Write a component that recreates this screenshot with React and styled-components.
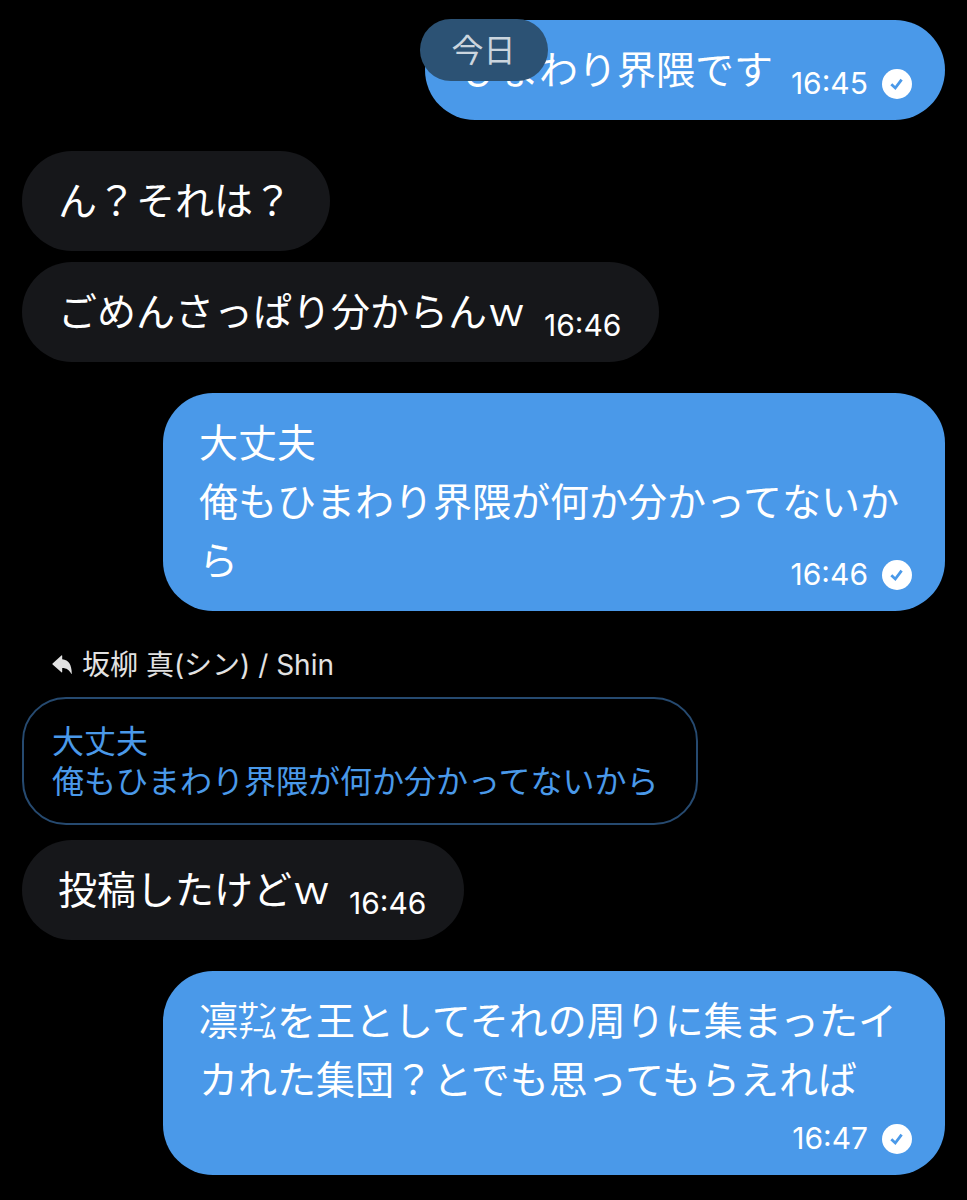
import styled, { createGlobalStyle } from "styled-components";

export default function App() {
  return (
    <>
      <GlobalStyle />
      <Chat lang="ja">
        <DateBadge>今日</DateBadge>
        <Group>
          <Message mine time="16:45">ひまわり界隈です</Message>
        </Group>
        <Group>
          <Message>ん？それは？</Message>
          <Message time="16:46">ごめんさっぱり分からんｗ</Message>
        </Group>
        <Group>
          <Message mine time="16:46">
            大丈夫
            <br />
            俺もひまわり界隈が何か分かってないから
          </Message>
        </Group>
        <Group>
          <ReplyTo>
            <ReplyIcon />
            坂柳 真(シン) / Shin
          </ReplyTo>
          <Quote>
            大丈夫
            <br />
            俺もひまわり界隈が何か分かってないから
          </Quote>
          <Message time="16:46">投稿したけどｗ</Message>
        </Group>
        <Group>
          <Message mine below time="16:47">
            凛㌠を王としてそれの周りに集まったイカれた集団？とでも思ってもらえれば
          </Message>
        </Group>
      </Chat>
    </>
  );
}

function Message({ mine, below, time, children }) {
  return (
    <Bubble $mine={mine}>
      {children}
      {time && (
        <Meta $below={below}>
          <time>{time}</time>
          {mine && <SentIcon />}
        </Meta>
      )}
    </Bubble>
  );
}

function SentIcon() {
  return (
    <svg width="30" height="30" viewBox="0 0 30 30" aria-hidden="true">
      <circle cx="15" cy="15" r="15" fill="#ffffff" />
      <path d="M9.3 15.2l4 3.8 6.3-8.3" fill="none" stroke="#4a99e9" strokeWidth="2.8" />
    </svg>
  );
}

function ReplyIcon() {
  return (
    <svg width="20" height="20" viewBox="0 0 20 20" aria-hidden="true">
      <path
        d="M0.6 8.4L9.4 0.4Q10.2 -0.1 10.2 0.8V4.3C16.8 4.8 19.6 10 19.8 18.4Q19.8 19.4 19.1 18.6C17.2 14.8 14.6 13.1 10.2 13V16.8Q10.2 17.7 9.4 17.2L0.6 9.4Q0.1 8.9 0.6 8.4Z"
        fill="#e2e2e2"
      />
    </svg>
  );
}

const GlobalStyle = createGlobalStyle`
  * {
    box-sizing: border-box;
  }
  body {
    margin: 0;
    background-color: #000000;
    font-family: "Noto Sans CJK JP", sans-serif;
  }
`;

const Chat = styled.main`
  position: relative;
  display: flex;
  flex-direction: column;
  gap: 31px;
  padding: 20px 22px 25px;
`;

const DateBadge = styled.div`
  position: absolute;
  top: 19px;
  left: 50%;
  transform: translateX(-50%);
  padding: 0 32px 4px;
  border-radius: 31px;
  background-color: #2c5274;
  color: #cbd5de;
  font-size: 32px;
  line-height: 58px;
`;

const Group = styled.section`
  display: flex;
  flex-direction: column;
  align-items: flex-start;
  gap: 11px;
`;

const Bubble = styled.div`
  max-width: calc(100% - 141px);
  align-self: ${({ $mine }) => ($mine ? "flex-end" : "flex-start")};
  display: flow-root;
  padding: 18px ${({ $mine }) => ($mine ? "33px" : "38px")} 21px 36px;
  border-radius: 50px;
  background-color: ${({ $mine }) => ($mine ? "#4a99e9" : "#16171a")};
  color: #ffffff;
  font-size: 39px;
  line-height: 59px;

  &::after {
    content: "";
    display: block;
    height: 2px;
  }
`;

const Meta = styled.span`
  float: right;
  display: flex;
  align-items: center;
  gap: 14px;
  height: 31px;
  margin-top: ${({ $below }) => ($below ? "16px" : "30px")};
  margin-left: 18px;
  font-family: Inter, sans-serif;
  font-size: 30px;
  line-height: 31px;
`;

const ReplyTo = styled.p`
  display: flex;
  align-items: center;
  gap: 10px;
  margin: 4px 30px 2px;
  color: #e2e2e2;
  font-family: Inter, "Noto Sans CJK JP", sans-serif;
  font-size: 28px;
  line-height: 38px;
`;

const Quote = styled.blockquote`
  margin: 0 0 4px;
  padding: 20px 38px 24px 28px;
  border: 2px solid #264a70;
  border-radius: 44px;
  color: #4a99e9;
  font-size: 32px;
  line-height: 40px;
`;
